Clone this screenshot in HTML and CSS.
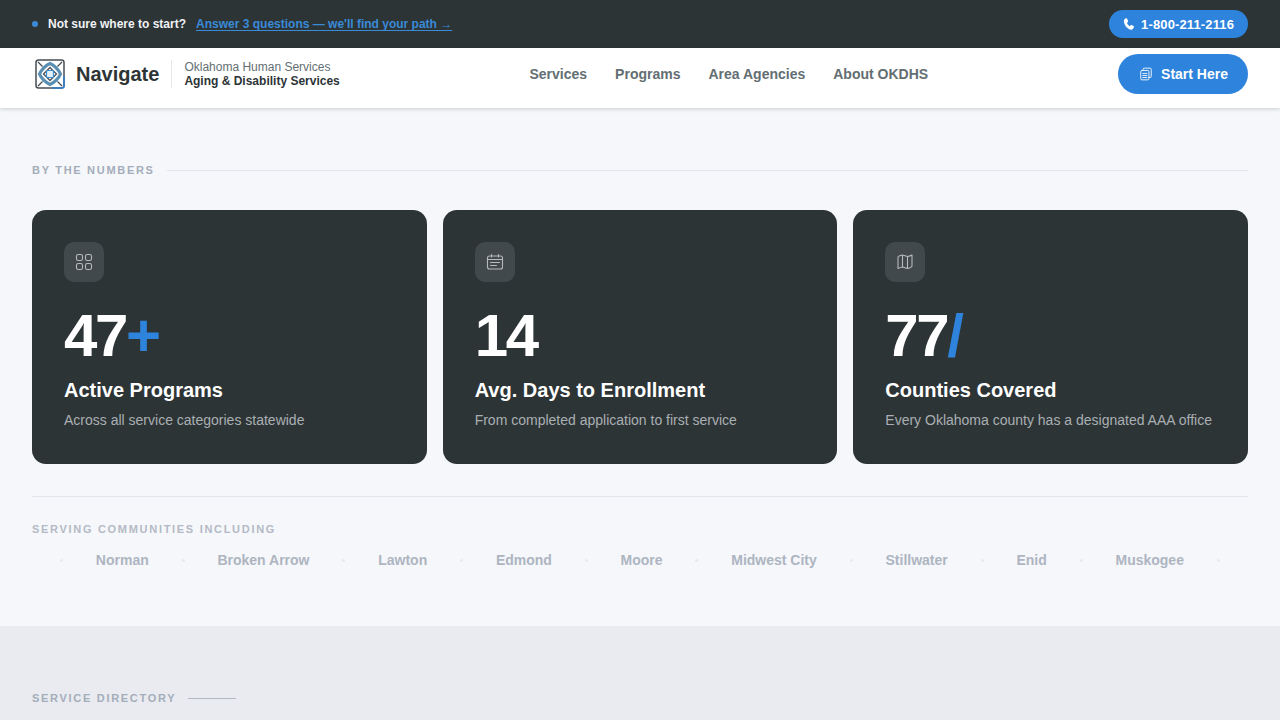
FILE: index.html
```html
<!DOCTYPE html>
<html lang="en">
<head>
<meta charset="utf-8">
<title>Navigate</title>
<link rel="stylesheet" href="styles.css">
</head>
<body>
<div class="topbar">
  <div class="prompt">
    <span class="dot"></span>
    <strong class="ask">Not sure where to start?</strong>
    <a class="ask-link" href="#">Answer 3 questions — we'll find your path →</a>
  </div>
  <a class="phone" href="#">
    <svg class="phone-icon" viewBox="2 1 20 21"><path fill="currentColor" d="M6.600 1.500c.7-.3 1.400-.1 1.800.5l2 3.800c.3.600.2 1.200-.2 1.700L8.800 9.100c-.3.300-.3.600-.2 1 .9 2 2.200 3.500 4.200 4.800.4.200.7.200 1-.1l1.500-1.400c.5-.4 1.200-.5 1.700-.1l3.300 2.300c.6.400.7 1.100.4 1.700-1 1.900-2.400 4.200-4.500 4.200C9 21.500 3 12.800 3 6c0-2 1.700-3.500 3.600-4.500z"/></svg>
    1-800-211-2116
  </a>
</div>
<header class="nav">
  <div class="brand">
    <svg class="logo" viewBox="0 0 30 30" fill="none">
      <rect x="1" y="1" width="28" height="28" rx="2.500" stroke="#474e53" stroke-width="1.500"/>
      <path d="M29 17v10a2 2 0 0 1-2 2H17" stroke="#2f80d0" stroke-width="1.500"/>
      <path d="M15 4.500C19 6 24 11 25.500 15 24 19 19 24 15 25.500 11 24 6 19 4.500 15 6 11 11 6 15 4.500z" stroke="#5a8fb4" stroke-width="3.200"/>
      <path d="M15 8.500 21.500 15 15 21.500 8.500 15z" stroke="#474e53" stroke-width="1.300"/>
      <path d="M3 3 7.500 7.500M27 3 22.500 7.500M3 27 7.500 22.500M27 27 22.500 22.500" stroke="#474e53" stroke-width="1.300"/>
      <rect x="11.500" y="11.500" width="7" height="7" rx="1" fill="#e3f0f9" stroke="#3f8fd0" stroke-width="1.200"/>
    </svg>
    <span class="brand-name">Navigate</span>
    <span class="brand-rule"></span>
    <span class="brand-sub">
      <span class="org">Oklahoma Human Services</span>
      <strong class="dept">Aging &amp; Disability Services</strong>
    </span>
  </div>
  <nav class="links">
    <a href="#">Services</a>
    <a href="#">Programs</a>
    <a href="#">Area Agencies</a>
    <a href="#">About OKDHS</a>
  </nav>
  <a class="start" href="#">
    <svg class="start-icon" viewBox="0 0 24 24" fill="none" stroke="currentColor" stroke-width="1.500" stroke-linejoin="round" stroke-linecap="round">
      <rect x="3" y="6" width="14" height="16" rx="2"/>
      <path d="M7 6V4a2 2 0 0 1 2-2h10a2 2 0 0 1 2 2v12a2 2 0 0 1-2 2h-2"/>
      <path d="M6.500 11h7M6.500 14.500h7M6.500 18h7"/>
    </svg>
    Start Here
  </a>
</header>
<main>
  <section class="numbers">
    <div class="eyebrow"><span>BY THE NUMBERS</span><i class="eyebrow-line"></i></div>
    <div class="cards">
      <article class="card">
        <div class="card-icon">
          <svg viewBox="0 0 18 18" fill="none" stroke="currentColor" stroke-width="1.100"><rect x="1.500" y="1.500" width="6" height="6" rx="1.800"/><rect x="10.500" y="1.500" width="6" height="6" rx="1.800"/><rect x="1.500" y="10.500" width="6" height="6" rx="1.800"/><rect x="10.500" y="10.500" width="6" height="6" rx="1.800"/></svg>
        </div>
        <div class="stat">47<em class="plus">+</em></div>
        <h3>Active Programs</h3>
        <p>Across all service categories statewide</p>
      </article>
      <article class="card">
        <div class="card-icon">
          <svg viewBox="0 0 18 18" fill="none" stroke="currentColor" stroke-width="1.100" stroke-linecap="round"><rect x="1.500" y="3" width="15" height="13" rx="2"/><path d="M1.500 6.500h15M5.500 1.500V4M12.500 1.500V4M4.500 9.500h9M4.500 12.500h6"/></svg>
        </div>
        <div class="stat">14</div>
        <h3>Avg. Days to Enrollment</h3>
        <p>From completed application to first service</p>
      </article>
      <article class="card">
        <div class="card-icon">
          <svg viewBox="0 0 18 18" fill="none" stroke="currentColor" stroke-width="1.100" stroke-linejoin="round"><path d="M2 4c0-.8 3-2 4.500-2l5 1.500c1.500 0 4.500-1.500 4.500-1.500v11c0 1-3 2.500-4.500 2.500l-5-1.500C5 14 2 15.500 2 15.500z"/><path d="M6.500 2v12.500M11.500 3.500V16"/></svg>
        </div>
        <div class="stat">77<em class="slash">/</em></div>
        <h3>Counties Covered</h3>
        <p>Every Oklahoma county has a designated AAA office</p>
      </article>
    </div>
    <div class="communities">
      <div class="comm-label">SERVING COMMUNITIES INCLUDING</div>
      <ul class="comm-list">
        <li class="sep"></li><li>Norman</li>
        <li class="sep"></li><li>Broken Arrow</li>
        <li class="sep"></li><li>Lawton</li>
        <li class="sep"></li><li>Edmond</li>
        <li class="sep"></li><li>Moore</li>
        <li class="sep"></li><li>Midwest City</li>
        <li class="sep"></li><li>Stillwater</li>
        <li class="sep"></li><li>Enid</li>
        <li class="sep"></li><li>Muskogee</li>
        <li class="sep"></li>
      </ul>
    </div>
  </section>
  <section class="directory">
    <div class="eyebrow short"><span>SERVICE DIRECTORY</span><i class="eyebrow-line"></i></div>
  </section>
</main>
</body>
</html>
```

FILE: styles.css
```css
* { box-sizing: border-box; }
html, body { margin: 0; padding: 0; height: 720px; overflow: hidden; }
body { font-family: "Liberation Sans", Arial, sans-serif; background: #f5f7fb; color: #2d3436; }
a { text-decoration: none; color: inherit; }

.topbar { height: 48px; background: #2d3436; display: flex; align-items: center; justify-content: space-between; padding: 0 32px; }
.prompt { display: flex; align-items: center; font-size: 12px; }
.dot { width: 6px; height: 6px; border-radius: 50%; background: #3a8ad8; margin-right: 10px; }
.ask { color: #f0f2f5; font-weight: 700; margin-right: 10px; }
.ask-link { color: #3a8ad8; font-weight: 700; text-decoration: underline; text-underline-offset: 2px; }
.phone { display: flex; align-items: center; gap: 6px; height: 28px; padding: 0 14px; border-radius: 14px; background: #2e84dc; color: #fff; font-size: 13px; font-weight: 700; letter-spacing: 0.13px; }
.phone-icon { width: 12px; height: 12px; }

.nav { height: 60px; background: #fff; display: flex; align-items: center; padding: 0 32px 8px 35px; box-shadow: 0 1px 4px rgba(45,52,54,.22); position: relative; }
.brand { display: flex; align-items: center; width: 494.5px; }
.logo { width: 30px; height: 30px; margin-right: 11px; }
.brand-name { font-size: 20px; font-weight: 700; color: #2d3436; }
.brand-rule { width: 1px; height: 28px; background: #e4e7ec; margin: 0 12px; }
.brand-sub { display: flex; flex-direction: column; font-size: 12px; line-height: 14px; }
.org { color: #636e72; }
.dept { color: #2d3436; font-weight: 700; }
.links { display: flex; gap: 28px; font-size: 14px; font-weight: 700; color: #636e72; }
.start { margin-left: auto; display: flex; align-items: center; gap: 8px; height: 40px; padding: 0 20px 0 21px; border-radius: 20px; background: #2e84dc; color: #fff; font-size: 14px; font-weight: 700; }
.start-icon { width: 14px; height: 14px; }

.numbers { height: 518px; padding: 56px 32px 0; }
.eyebrow { display: flex; align-items: center; gap: 12px; font-size: 11px; font-weight: 700; letter-spacing: 1.7px; color: #a4adba; line-height: 13px; }
.eyebrow-line { flex: 1; height: 1px; background: #e2e5eb; }
.cards { display: grid; grid-template-columns: repeat(3, 1fr); gap: 16px; margin-top: 33px; }
.card { height: 254px; background: #2d3436; border-radius: 14px; padding: 32px; color: #fff; }
.card-icon { width: 40px; height: 40px; border-radius: 10px; background: #42494c; display: flex; align-items: center; justify-content: center; color: #b4babd; }
.card-icon svg { width: 18px; height: 18px; }
.stat { font-size: 60px; line-height: 60px; font-weight: 700; letter-spacing: -2.4px; margin-top: 24px; color: #fff; }
.stat em { color: #2e84dc; font-style: normal; }
.card h3 { margin: 11px 0 0; font-size: 20px; line-height: 26px; font-weight: 700; color: #fff; }
.card p { margin: 7px 0 0; font-size: 14px; line-height: 20px; color: #a9afb3; }

.communities { margin-top: 32px; border-top: 1px solid #e2e5eb; padding-top: 26px; }
.comm-label { font-size: 11px; font-weight: 700; letter-spacing: 1.7px; line-height: 13px; color: #b4bac5; }
.comm-list { list-style: none; margin: 15px 0 0; padding: 0 28px 0 28px; display: flex; align-items: center; justify-content: space-between; font-size: 14px; line-height: 18px; font-weight: 700; color: #aeb5c1; }
.sep { width: 3px; height: 3px; border-radius: 50%; background: #e6e9ee; }

.directory { height: 94px; background: #e9ebf0; padding: 66px 32px 0; }
.directory .eyebrow-line { flex: 0 0 48px; background: #b4bac5; }
```
